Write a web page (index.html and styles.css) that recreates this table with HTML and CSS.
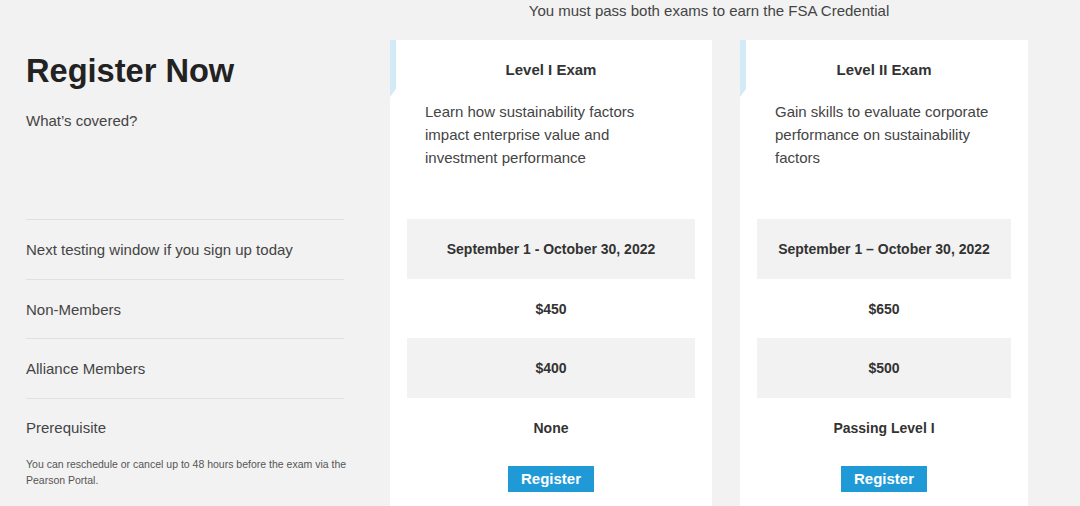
FILE: index.html
```html
<!DOCTYPE html>
<html lang="en">
<head>
<meta charset="utf-8">
<title>Register Now</title>
<link rel="stylesheet" href="styles.css">
</head>
<body>
<div class="page">
  <div class="top">
    <p class="top-note">You must pass both exams to earn the FSA Credential</p>
  </div>
  <div class="main">
    <div class="left">
      <div class="intro">
        <h1 class="title">Register Now</h1>
        <p class="covered">What’s covered?</p>
      </div>
      <div class="label-row r60">Next testing window if you sign up today</div>
      <div class="label-row r59">Non-Members</div>
      <div class="label-row r60">Alliance Members</div>
      <div class="label-row r58">Prerequisite</div>
      <p class="note">You can reschedule or cancel up to 48 hours before the exam via the Pearson Portal.</p>
    </div>

    <div class="card card-one">
      <span class="ribbon"></span>
      <div class="card-intro">
        <h2 class="card-title">Level I Exam</h2>
        <p class="card-desc">Learn how sustainability factors impact enterprise value and investment performance</p>
      </div>
      <div class="cell gray r60">September 1 - October 30, 2022</div>
      <div class="cell r59">$450</div>
      <div class="cell gray r60">$400</div>
      <div class="cell r59">None</div>
      <div class="btn-wrap"><a class="btn" href="#">Register</a></div>
    </div>

    <div class="card card-two">
      <span class="ribbon"></span>
      <div class="card-intro">
        <h2 class="card-title">Level II Exam</h2>
        <p class="card-desc">Gain skills to evaluate corporate performance on sustainability factors</p>
      </div>
      <div class="cell gray r60">September 1 – October 30, 2022</div>
      <div class="cell r59">$650</div>
      <div class="cell gray r60">$500</div>
      <div class="cell r59">Passing Level I</div>
      <div class="btn-wrap"><a class="btn" href="#">Register</a></div>
    </div>
  </div>
</div>
</body>
</html>
```

FILE: styles.css
```css
* { box-sizing: border-box; }

html, body {
  margin: 0;
  padding: 0;
  background: #f2f2f2;
  font-family: "Liberation Sans", sans-serif;
  color: #444;
  height: 506px;
  overflow: hidden;
}

.page {
  padding-left: 26px;
}

.top {
  height: 40px;
  display: flex;
  padding-left: 364px;
}

.top-note {
  margin: 0;
  width: 638px;
  text-align: center;
  font-size: 15px;
  line-height: 22px;
  color: #444;
}

.main {
  display: flex;
  align-items: flex-start;
}

/* Left column */
.left {
  width: 340px;
  margin-right: 24px;
}

.intro {
  height: 179px;
  padding-top: 12px;
}

.title {
  margin: 0;
  font-size: 32.6px;
  line-height: 38px;
  font-weight: bold;
  color: #222;
}

.covered {
  margin: 20px 0 0;
  font-size: 15px;
  line-height: 22px;
  color: #444;
}

.label-row {
  width: 318px;
  border-top: 1px solid #e0e0e0;
  display: flex;
  align-items: center;
  font-size: 15px;
  color: #444;
}

.r60 { height: 60px; }
.r59 { height: 59px; }
.r58 { height: 58px; }

.note {
  margin: 0;
  font-size: 10.5px;
  line-height: 16px;
  color: #555;
}

/* Cards */
.card {
  position: relative;
  background: #fff;
  height: 470px;
  padding: 0 17px;
}

.card-one { width: 322px; }
.card-two { width: 288px; margin-left: 28px; }

.ribbon {
  position: absolute;
  left: 0;
  top: 0;
  width: 6px;
  height: 57px;
  background: #d3eaf7;
  clip-path: polygon(0 0, 100% 0, 100% 86%, 0 100%);
}

.card-intro {
  height: 179px;
  padding: 19px 18px 0;
}

.card-title {
  margin: 0;
  text-align: center;
  font-size: 15px;
  line-height: 22px;
  font-weight: bold;
  color: #333;
}

.card-desc {
  margin: 19px 0 0;
  max-width: 232px;
  font-size: 15px;
  line-height: 23px;
  color: #444;
}

.cell {
  display: flex;
  align-items: center;
  justify-content: center;
  font-size: 14px;
  font-weight: bold;
  color: #333;
}

.cell.gray { background: #f2f2f2; }

.btn-wrap {
  display: flex;
  justify-content: center;
  padding-top: 9px;
}

.btn {
  display: inline-block;
  height: 26px;
  line-height: 26px;
  padding: 0 13px;
  background: #1f9ad7;
  color: #fff;
  font-size: 15px;
  font-weight: bold;
  text-decoration: none;
}
```
